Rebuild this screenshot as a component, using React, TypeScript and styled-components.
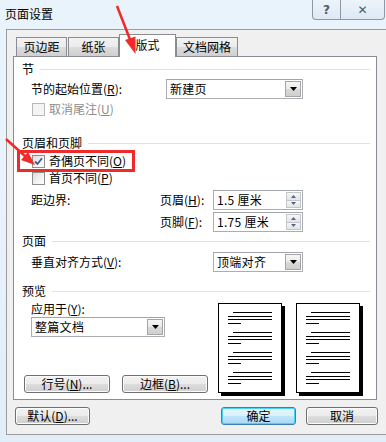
import React from "react";
import styled, { createGlobalStyle, css } from "styled-components";

const Global = createGlobalStyle`
  html, body { margin: 0; padding: 0; background: #fff; }
  body {
    font-family: "Noto Sans CJK SC", "DejaVu Sans", sans-serif;
    font-size: 12px;
    color: #000;
  }
`;

const FONT = `"Noto Sans CJK SC", "Liberation Sans", sans-serif`;

const Window = styled.div`
  position: relative;
  width: 386px;
  height: 442px;
  overflow: hidden;
  background: linear-gradient(180deg, #e9f3fb 0%, #eaf3fb 40%, #e2edf7 100%);
  font-family: ${FONT};
  font-size: 12px;
  line-height: 1;
`;

const TitleBar = styled.div`
  display: flex;
  align-items: flex-start;
  height: 29px;
`;

const Title = styled.div`
  margin: 7px 0 0 5px;
  font-size: 12px;
  line-height: 14px;
`;

const Captions = styled.div`
  display: flex;
  margin-left: auto;
  margin-right: 1px;
`;

const CaptionBtn = styled.div<{ $w: number; $first?: boolean }>`
  width: ${(p) => p.$w}px;
  height: 20px;
  box-sizing: border-box;
  border: 1px solid #8b98a5;
  border-top: none;
  ${(p) =>
    p.$first
      ? css`border-bottom-left-radius: 4px; border-right: none;`
      : css`border-bottom-right-radius: 4px;`}
  background: linear-gradient(180deg, #edf4fa, #dde9f4);
  display: flex;
  align-items: center;
  justify-content: center;
  color: #4e5b67;
  font-family: "DejaVu Sans", sans-serif;
  font-weight: bold;
  font-size: 12px;
`;

const Body = styled.div`
  margin-left: 6px;
  height: 406px;
  box-sizing: border-box;
  border-top: 1px solid #9c9c9c;
  border-left: 1px solid #9c9c9c;
  border-bottom: 1px solid #9c9c9c;
  background: #f0f0f0;
  padding: 4px 0 0 6px;
  display: flex;
  flex-direction: column;
`;

const TabStrip = styled.div`
  display: flex;
  align-items: flex-end;
  height: 23px;
  margin-left: 3px;
  margin-bottom: -1px;
`;

const Tab = styled.div<{ $w: number; $active?: boolean; $gap?: number }>`
  width: ${(p) => p.$w}px;
  margin-left: ${(p) => p.$gap ?? 0}px;
  box-sizing: border-box;
  height: ${(p) => (p.$active ? 23 : 20)}px;
  border: 1px solid #898c95;
  border-bottom: ${(p) => (p.$active ? "none" : "1px solid #898c95")};
  background: ${(p) =>
    p.$active ? "#fff" : "linear-gradient(180deg, #f3f3f3 0%, #ebebeb 50%, #dddddd 51%, #cfcfcf 100%)"};
  display: flex;
  align-items: center;
  justify-content: center;
  padding-bottom: ${(p) => (p.$active ? 2 : 0)}px;
  font-size: 12px;
  ${(p) => p.$active && css`position: relative;`}
`;

const Panel = styled.div`
  width: 364px;
  height: 344px;
  box-sizing: border-box;
  border: 1px solid #898c95;
  background: #fff;
  padding: 5px 6px 0 8px;
  display: flex;
  flex-direction: column;
`;

const Heading = styled.div<{ $mt?: number }>`
  display: flex;
  align-items: center;
  height: 14px;
  margin-top: ${(p) => p.$mt ?? 0}px;
  gap: 6px;
  &::after {
    content: "";
    flex: 1;
    height: 1px;
    background: #dde2e8;
    margin-top: 1px;
  }
`;

const FormRow = styled.div<{ $cols: string; $mt?: number }>`
  display: grid;
  grid-template-columns: ${(p) => p.$cols};
  align-items: center;
  height: 20px;
  margin-top: ${(p) => p.$mt ?? 0}px;
  padding-left: 9px;
`;

const CheckRow = styled.div<{ $mt?: number; $disabled?: boolean }>`
  display: flex;
  align-items: center;
  gap: 4px;
  height: 16px;
  margin-top: ${(p) => p.$mt ?? 0}px;
  padding-left: 10px;
  color: ${(p) => (p.$disabled ? "#8d8d8d" : "#000")};
`;

const Box = styled.span<{ $disabled?: boolean }>`
  width: 13px;
  height: 13px;
  box-sizing: border-box;
  border: 1px solid ${(p) => (p.$disabled ? "#b8b8b8" : "#8e8f8f")};
  background: ${(p) =>
    p.$disabled ? "#f4f4f4" : "linear-gradient(135deg, #dcdcdc 0%, #f4f4f4 60%, #fdfdfd 100%)"};
  display: inline-flex;
  align-items: center;
  justify-content: center;
`;

const Label = styled.span``;

const Key = styled.span`
  text-decoration: underline;
`;

const Field = styled.div<{ $w: number }>`
  width: ${(p) => p.$w}px;
  height: 20px;
  box-sizing: border-box;
  border: 1px solid #abadb3;
  border-top-color: #a0a4ab;
  background: #fff;
  display: flex;
  align-items: center;
  padding-left: 3px;
`;

const FieldText = styled.span`
  flex: 1;
  letter-spacing: 0.3px;
`;

const DropBtn = styled.span`
  width: 16px;
  height: 16px;
  margin-right: 1px;
  box-sizing: border-box;
  border: 1px solid #a5a5a5;
  background: linear-gradient(180deg, #f6f6f6 0%, #e9e9e9 50%, #d9d9d9 51%, #cfcfcf 100%);
  display: flex;
  align-items: center;
  justify-content: center;
`;

const Spin = styled.span`
  width: 15px;
  height: 16px;
  margin-right: 1px;
  display: flex;
  flex-direction: column;
`;

const SpinHalf = styled.span`
  flex: 1;
  box-sizing: border-box;
  border: 1px solid #c3c7cb;
  background: linear-gradient(180deg, #f7f7f7, #e3e3e3);
  display: flex;
  align-items: center;
  justify-content: center;
  & + & { border-top: none; }
`;

const PreviewArea = styled.div`
  display: flex;
  flex: 1;
  padding-bottom: 6px;
`;

const LeftCol = styled.div`
  width: 196px;
  display: flex;
  flex-direction: column;
`;

const ApplyLabel = styled.div`
  height: 16px;
  display: flex;
  align-items: center;
  margin: 3px 0 0 9px;
`;

const ApplyField = styled.div`
  margin-left: 9px;
`;

const PanelButtons = styled.div`
  display: flex;
  gap: 12px;
  margin-top: auto;
  margin-left: 2px;
`;

const Button = styled.div<{ $w: number; $default?: boolean }>`
  width: ${(p) => p.$w}px;
  height: 18px;
  box-sizing: border-box;
  border: 1px solid ${(p) => (p.$default ? "#3c7fb1" : "#707070")};
  border-radius: 3px;
  box-shadow: inset 0 0 0 1px ${(p) => (p.$default ? "#48d4f8" : "#fcfcfc")};
  background: ${(p) =>
    p.$default
      ? "linear-gradient(180deg, #eaf6fd 0%, #d9f0fc 50%, #bee6fd 51%, #a7d9f5 100%)"
      : "linear-gradient(180deg, #f2f2f2 0%, #ebebeb 50%, #dddddd 51%, #cfcfcf 100%)"};
  display: flex;
  align-items: center;
  justify-content: center;
  font-size: 12px;
`;

const Pages = styled.div`
  display: flex;
  gap: 14px;
  margin-top: 5px;
`;

const Page = styled.div`
  width: 64px;
  height: 90px;
  box-sizing: border-box;
  border: 1px solid #000;
  background: #fff;
  box-shadow: 3px 3px 0 #000;
`;

const Footer = styled.div`
  display: flex;
  align-items: center;
  margin-top: 7px;
  padding-left: 2px;
`;

const FooterRight = styled.div`
  display: flex;
  gap: 10px;
  margin-left: auto;
  margin-right: 8px;
`;

const Annot = styled.svg<{ $x: number; $y: number }>`
  position: absolute;
  left: ${(p) => p.$x}px;
  top: ${(p) => p.$y}px;
  z-index: 10;
  pointer-events: none;
  overflow: visible;
`;

const Highlight = styled.div`
  position: absolute;
  left: 17px;
  top: 150px;
  width: 118px;
  height: 22px;
  box-sizing: border-box;
  border: 3px solid #f02a2a;
  z-index: 9;
`;

const Caret = () => (
  <svg width="7" height="4" viewBox="0 0 7 4">
    <path d="M0 0h7L3.5 4z" fill="#000" />
  </svg>
);

const Arrow = ({ up }: { up?: boolean }) => (
  <svg width="5" height="3" viewBox="0 0 5 3">
    <path d={up ? "M0 3h5L2.5 0z" : "M0 0h5L2.5 3z"} fill="#4f6593" />
  </svg>
);

const Check = () => (
  <svg width="9" height="9" viewBox="0 0 9 9">
    <path d="M1 4.5 3.5 7 8 1.2" fill="none" stroke="#3d5a98" strokeWidth="1.8" />
  </svg>
);

const Select = ({ w, value }: { w: number; value: string }) => (
  <Field $w={w}>
    <FieldText>{value}</FieldText>
    <DropBtn>
      <Caret />
    </DropBtn>
  </Field>
);

const Spinner = ({ value }: { value: string }) => (
  <Field $w={90}>
    <FieldText>{value}</FieldText>
    <Spin>
      <SpinHalf>
        <Arrow up />
      </SpinHalf>
      <SpinHalf>
        <Arrow />
      </SpinHalf>
    </Spin>
  </Field>
);

const PageLines = () => {
  const groups = [0, 20, 40, 60];
  return (
    <svg width="62" height="88" viewBox="0 0 62 88">
      {groups.map((g) => (
        <g key={g} stroke="#000" strokeWidth="1">
          <line x1="14" x2="53" y1={8.5 + g} y2={8.5 + g} />
          <line x1="9" x2="53" y1={12.5 + g} y2={12.5 + g} />
          <line x1="9" x2="53" y1={15.5 + g} y2={15.5 + g} />
          <line x1="9" x2="22" y1={19.5 + g} y2={19.5 + g} />
        </g>
      ))}
    </svg>
  );
};

const L = ({ text, k, tail = "" }: { text: string; k: string; tail?: string }) => (
  <Label>
    {text}(<Key>{k}</Key>){tail}
  </Label>
);

export default function App() {
  return (
    <>
      <Global />
      <Window>
        <TitleBar>
          <Title>页面设置</Title>
          <Captions>
            <CaptionBtn $w={28} $first>?</CaptionBtn>
            <CaptionBtn $w={45}>✕</CaptionBtn>
          </Captions>
        </TitleBar>
        <Body>
          <TabStrip>
            <Tab $w={51}>页边距</Tab>
            <Tab $w={51} $gap={1}>纸张</Tab>
            <Tab $w={57} $active>版式</Tab>
            <Tab $w={62}>文档网格</Tab>
          </TabStrip>
          <Panel>
            <Heading>节</Heading>
            <FormRow $cols="135px 137px" $mt={3}>
              <L text="节的起始位置" k="R" tail=":" />
              <Select w={137} value="新建页" />
            </FormRow>
            <CheckRow $mt={2} $disabled>
              <Box $disabled />
              <L text="取消尾注" k="U" />
            </CheckRow>

            <Heading $mt={19}>页眉和页脚</Heading>
            <CheckRow $mt={3}>
              <Box>
                <Check />
              </Box>
              <L text="奇偶页不同" k="O" />
            </CheckRow>
            <CheckRow $mt={1}>
              <Box />
              <L text="首页不同" k="P" />
            </CheckRow>
            <FormRow $cols="129px 53px 90px" $mt={4}>
              <Label>距边界:</Label>
              <L text="页眉" k="H" tail=":" />
              <Spinner value="1.5 厘米" />
            </FormRow>
            <FormRow $cols="129px 53px 90px" $mt={2}>
              <span />
              <L text="页脚" k="F" tail=":" />
              <Spinner value="1.75 厘米" />
            </FormRow>

            <Heading $mt={2}>页面</Heading>
            <FormRow $cols="182px 90px" $mt={4}>
              <L text="垂直对齐方式" k="V" tail=":" />
              <Select w={90} value="顶端对齐" />
            </FormRow>

            <Heading $mt={12}>预览</Heading>
            <PreviewArea>
              <LeftCol>
                <ApplyLabel>
                  <L text="应用于" k="Y" tail=":" />
                </ApplyLabel>
                <ApplyField>
                  <Select w={134} value="整篇文档" />
                </ApplyField>
                <PanelButtons>
                  <Button $w={86}>
                    <L text="行号" k="N" tail="..." />
                  </Button>
                  <Button $w={86}>
                    <L text="边框" k="B" tail="..." />
                  </Button>
                </PanelButtons>
              </LeftCol>
              <Pages>
                <Page>
                  <PageLines />
                </Page>
                <Page>
                  <PageLines />
                </Page>
              </Pages>
            </PreviewArea>
          </Panel>
          <Footer>
            <Button $w={75}>
              <L text="默认" k="D" tail="..." />
            </Button>
            <FooterRight>
              <Button $w={75} $default>确定</Button>
              <Button $w={72}>取消</Button>
            </FooterRight>
          </Footer>
        </Body>
        <Highlight />
        <Annot $x={112} $y={2} width="30" height="56" viewBox="0 0 30 56">
          <path d="M5 4 L19 40" stroke="#f02a2a" strokeWidth="2.5" fill="none" />
          <path d="M23.5 52 L13 38 L23.5 34.5 Z" fill="#f02a2a" />
        </Annot>
        <Annot $x={2} $y={134} width="36" height="34" viewBox="0 0 36 34">
          <path d="M4 5 L24 23" stroke="#f02a2a" strokeWidth="2.5" fill="none" />
          <path d="M33 31 L19 26 L26 18 Z" fill="#f02a2a" />
        </Annot>
      </Window>
    </>
  );
}
